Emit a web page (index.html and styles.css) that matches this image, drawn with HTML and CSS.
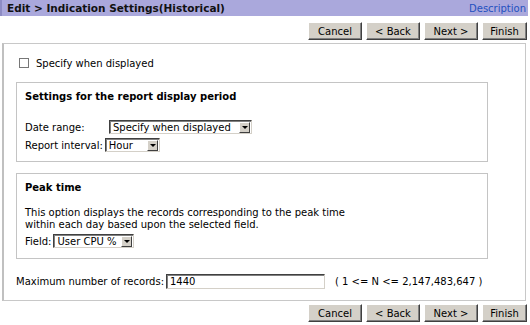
FILE: index.html
```html
<!DOCTYPE html>
<html>
<head>
    <title>Indication Settings</title>
    <link rel="stylesheet" href="styles.css">
</head>
<body>
    <div class="titlebar">
        <span class="title">Edit &gt; Indication Settings(Historical)</span>
        <a class="desc" href="#">Description</a>
    </div>
    <div class="buttons">
        <button>Cancel</button>
        <button>&lt; Back</button>
        <button>Next &gt;</button>
        <button class="finish">Finish</button>
    </div>
    <div class="panel">
        <label class="check-row"><span class="checkbox"></span>Specify when displayed</label>

        <div class="group">
            <div class="group-title">Settings for the report display period</div>
            <div class="row first">
                <span class="lbl wide">Date range:</span>
                <span class="select sel-range">Specify when displayed<span class="arrow"></span></span>
            </div>
            <div class="row">
                <span class="lbl">Report interval:</span>
                <span class="select sel-interval">Hour<span class="arrow"></span></span>
            </div>
        </div>

        <div class="group peak">
            <div class="group-title">Peak time</div>
            <p class="note">This option displays the records corresponding to the peak time<br>within each day based upon the selected field.</p>
            <div class="row">
                <span class="lbl">Field:</span>
                <span class="select sel-field">User CPU %<span class="arrow"></span></span>
            </div>
        </div>

        <div class="max-row">
            <span class="lbl">Maximum number of records:</span>
            <span class="textbox">1440</span>
            <span class="range">( 1 &lt;= N &lt;= 2,147,483,647 )</span>
        </div>
    </div>
    <div class="buttons bottom">
        <button>Cancel</button>
        <button>&lt; Back</button>
        <button>Next &gt;</button>
        <button class="finish">Finish</button>
    </div>
</body>
</html>
```

FILE: styles.css
```css
body {
    margin: 0;
    width: 530px;
    height: 325px;
    background: #fff;
    font-family: "DejaVu Sans", Verdana, sans-serif;
    font-size: 10px;
    color: #000;
    overflow: hidden;
}
.titlebar {
    height: 16px;
    margin: 0 2px 0 0;
    background: #aaa8dc;
    border-left: 2px solid #8e8cc4;
    display: flex;
    justify-content: space-between;
    align-items: center;
    padding: 0 2px 0 5px;
}
.title {
    font-weight: bold;
    font-size: 10.5px;
    color: #111;
}
.desc {
    color: #2450c0;
    text-decoration: none;
    font-size: 10px;
}
.buttons {
    display: flex;
    justify-content: flex-end;
    gap: 4px;
    padding: 6px 3px 0 0;
}
.buttons.bottom {
    padding-top: 3px;
}
button {
    font-family: "DejaVu Sans", Verdana, sans-serif;
    font-size: 10px;
    color: #000;
    width: 54px;
    height: 18px;
    padding: 0;
    background: #d4d0c8;
    border: 1px solid;
    border-color: #fff #404040 #404040 #fff;
    box-shadow: inset -1px -1px 0 #808080;
}
button.finish {
    width: 45px;
}
.panel {
    margin: 3px 4px 0 2px;
    height: 256px;
    border: 1px solid #c8c8c8;
    border-left: 2px solid #c0c0c0;
    padding: 0 0 0 12px;
}
.check-row {
    display: flex;
    align-items: center;
    height: 14px;
    margin: 12px 0 0 3px;
}
.checkbox {
    width: 8px;
    height: 8px;
    border: 1px solid #777;
    background: #fff;
    margin-right: 7px;
}
.group {
    width: 472px;
    border: 1px solid #c4c4c4;
    margin-top: 12px;
    padding: 0 0 8px 8px;
    box-sizing: border-box;
    height: 80px;
}
.group.peak {
    height: 86px;
    margin-top: 11px;
}
.group-title {
    font-weight: bold;
    margin-top: 8px;
    height: 13px;
}
.row {
    display: flex;
    align-items: center;
    height: 16px;
    margin-top: 2px;
}
.row.first {
    margin-top: 15px;
}
.lbl {
    padding-right: 2px;
}
.lbl.wide {
    width: 82px;
}
.select {
    position: relative;
    height: 14px;
    line-height: 14px;
    box-sizing: border-box;
    border: 1px solid;
    border-color: #404040 #d4d0c8 #d4d0c8 #404040;
    box-shadow: inset 1px 1px 0 #808080;
    padding-left: 3px;
    background: #fff;
}
.sel-range { width: 143px; }
.sel-interval { width: 55px; }
.sel-field { width: 81px; }
.arrow {
    position: absolute;
    right: 1px;
    top: 1px;
    width: 11px;
    height: 11px;
    background: #d4d0c8;
    box-sizing: border-box;
    border: 1px solid;
    border-color: #fff #404040 #404040 #fff;
}
.arrow::after {
    content: "";
    position: absolute;
    left: 2px;
    top: 3px;
    border-left: 3px solid transparent;
    border-right: 3px solid transparent;
    border-top: 3px solid #000;
}
.note {
    margin: 12px 0 0 0;
    line-height: 12px;
}
.peak .row {
    margin-top: 2px;
}
.max-row {
    display: flex;
    align-items: center;
    margin-top: 15px;
    height: 15px;
}
.textbox {
    width: 159px;
    height: 15px;
    line-height: 14px;
    box-sizing: border-box;
    border: 1px solid;
    border-color: #404040 #d4d0c8 #d4d0c8 #404040;
    box-shadow: inset 1px 1px 0 #808080;
    padding-left: 3px;
}
.range {
    margin-left: 10px;
}
```
